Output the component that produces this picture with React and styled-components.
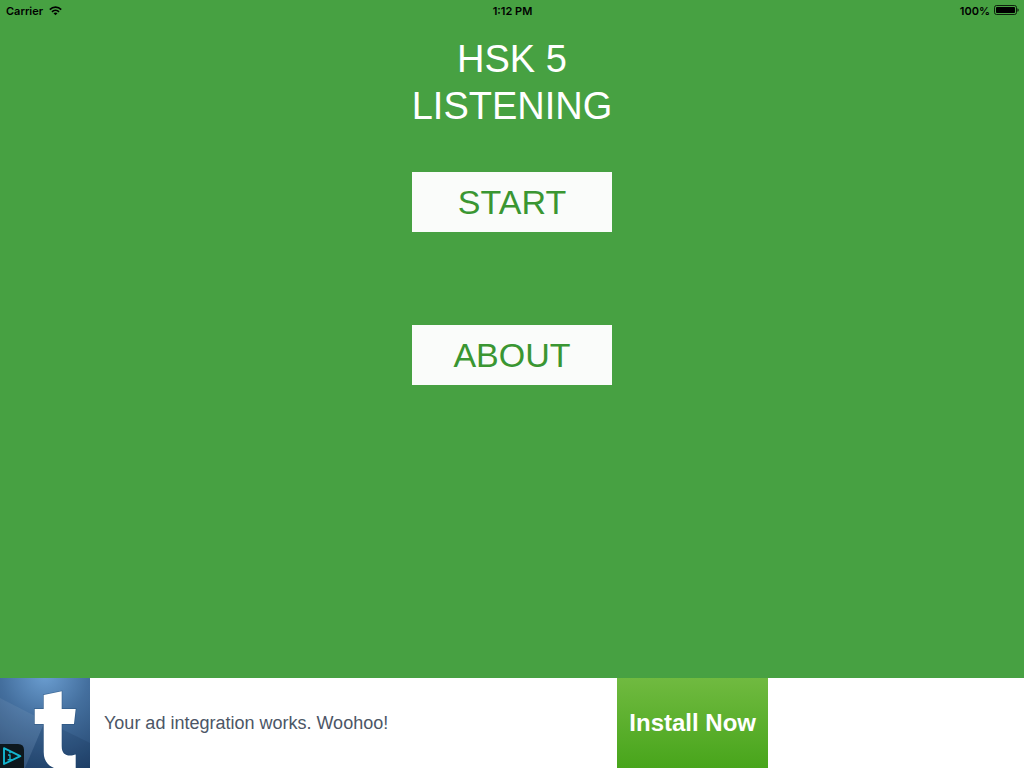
import React from 'react';
import styled, { createGlobalStyle } from 'styled-components';

const GlobalStyle = createGlobalStyle`
  * {
    box-sizing: border-box;
  }
  body {
    margin: 0;
    font-family: "Liberation Sans", Arial, sans-serif;
    background-color: #47a142;
  }
`;

const Page = styled.div`
  display: flex;
  flex-direction: column;
  min-height: 100vh;
`;

const StatusBar = styled.header`
  display: grid;
  grid-template-columns: 1fr auto 1fr;
  align-items: center;
  height: 20px;
  padding: 2px 5px 0 6px;
  font-family: Inter, "Liberation Sans", sans-serif;
  font-size: 11px;
  font-weight: 600;
  line-height: 18px;
  color: #000;
`;

const StatusGroup = styled.div`
  display: flex;
  align-items: center;
  justify-content: ${(props) => (props.$end ? 'flex-end' : 'flex-start')};
  gap: ${(props) => (props.$end ? '4px' : '6px')};
  > svg {
    display: block;
    margin-bottom: ${(props) => (props.$end ? '2px' : '0')};
  }
`;

const Menu = styled.main`
  display: flex;
  flex: 1;
  flex-direction: column;
  align-items: center;
  padding: 16px;
`;

const Title = styled.h1`
  margin: 0 0 42px;
  font-size: 38px;
  font-weight: 400;
  line-height: 47px;
  text-align: center;
  color: #fff;
  > span {
    display: block;
  }
`;

const MenuButton = styled.button`
  width: 200px;
  height: 60px;
  margin: 0 0 93px;
  padding: 0;
  border: 0;
  border-radius: 0;
  font-family: inherit;
  font-size: 34px;
  line-height: 60px;
  color: #3a9632;
  background-color: #fafcfa;
  cursor: pointer;
`;

const AdBanner = styled.aside`
  background-color: #fff;
`;

const AdContent = styled.div`
  display: flex;
  width: 75%;
  height: 90px;
  > svg {
    display: block;
    flex: none;
  }
`;

const AdText = styled.p`
  flex: 1;
  margin: 0;
  padding: 0 14px;
  font-size: 18px;
  line-height: 90px;
  color: #4c5666;
`;

const InstallLink = styled.a`
  flex: none;
  padding: 0 12px;
  font-size: 24px;
  font-weight: 700;
  line-height: 90px;
  text-decoration: none;
  color: #fff;
  background: linear-gradient(#70ba40, #48a51b);
`;

const WifiIcon = () => (
  <svg width="13" height="10" viewBox="0 0 13 10" aria-hidden="true">
    <g fill="none" stroke="#000" strokeWidth="1.7">
      <path d="M0.8 3.6C4 0.4 9 0.4 12.2 3.6" />
      <path d="M3 5.9C5 3.9 8 3.9 10 5.9" />
    </g>
    <path d="M4.5 7.2C5.7 6.1 7.3 6.1 8.5 7.2L6.5 9.2Z" />
  </svg>
);

const BatteryIcon = () => (
  <svg width="25" height="10" viewBox="0 0 25 10" aria-hidden="true">
    <rect x="0.5" y="0.5" width="22" height="9" rx="2" fill="none" stroke="#000" strokeWidth="0.8" />
    <rect x="2" y="2" width="19" height="6" rx="0.8" />
    <path d="M23.5 3.2C25 3.7 25 6.3 23.5 6.8Z" />
  </svg>
);

const AdIcon = () => (
  <svg width="90" height="90" viewBox="0 0 90 90" aria-hidden="true">
    <defs>
      <radialGradient id="sky" gradientUnits="userSpaceOnUse" cx="45" cy="-4" r="110">
        <stop offset="0" stopColor="#6c9fd2" />
        <stop offset="0.4" stopColor="#446f9e" />
        <stop offset="1" stopColor="#1f4068" />
      </radialGradient>
    </defs>
    <rect width="90" height="90" fill="url(#sky)" />
    <path d="M0 20L45 43L25 90H0Z" fill="#fff" opacity="0.07" />
    <path d="M45 43L90 65V90H25Z" fill="#001838" opacity="0.12" />
    <path
      d="M43.7 17L61.7 13.3V31H75.7L74 46H61.7V68C61.7 75 65 77.5 70 77.5C72 77.5 74 77 75.7 76.5V90H54C47 87 43.7 82 43.7 74V46H34.7V31H43.7Z"
      fill="#fff"
      stroke="#1d446f"
      strokeOpacity="0.45"
      strokeWidth="1.4"
      paintOrder="stroke"
    />
    <path d="M0 66H18Q24 66 24 72V90H0Z" fill="#0d171d" />
    <g fill="none" stroke="#13b5cf" strokeLinejoin="round">
      <path d="M4 70.2V86L20.3 78.1Z" strokeWidth="1.9" />
      <path d="M8 77H10V81.8M7.6 81.8H12M9.2 74.5H10.8" strokeWidth="1.4" />
    </g>
  </svg>
);

const App = () => {
  return (
    <Page>
      <GlobalStyle />
      <StatusBar>
        <StatusGroup>
          <span>Carrier</span>
          <WifiIcon />
        </StatusGroup>
        <span>1:12 PM</span>
        <StatusGroup $end>
          <span>100%</span>
          <BatteryIcon />
        </StatusGroup>
      </StatusBar>
      <Menu>
        <Title>
          <span>HSK 5</span>
          <span>LISTENING</span>
        </Title>
        <MenuButton type="button">START</MenuButton>
        <MenuButton type="button">ABOUT</MenuButton>
      </Menu>
      <AdBanner>
        <AdContent>
          <AdIcon />
          <AdText>Your ad integration works. Woohoo!</AdText>
          <InstallLink href="#install">Install Now</InstallLink>
        </AdContent>
      </AdBanner>
    </Page>
  );
};

export default App;
